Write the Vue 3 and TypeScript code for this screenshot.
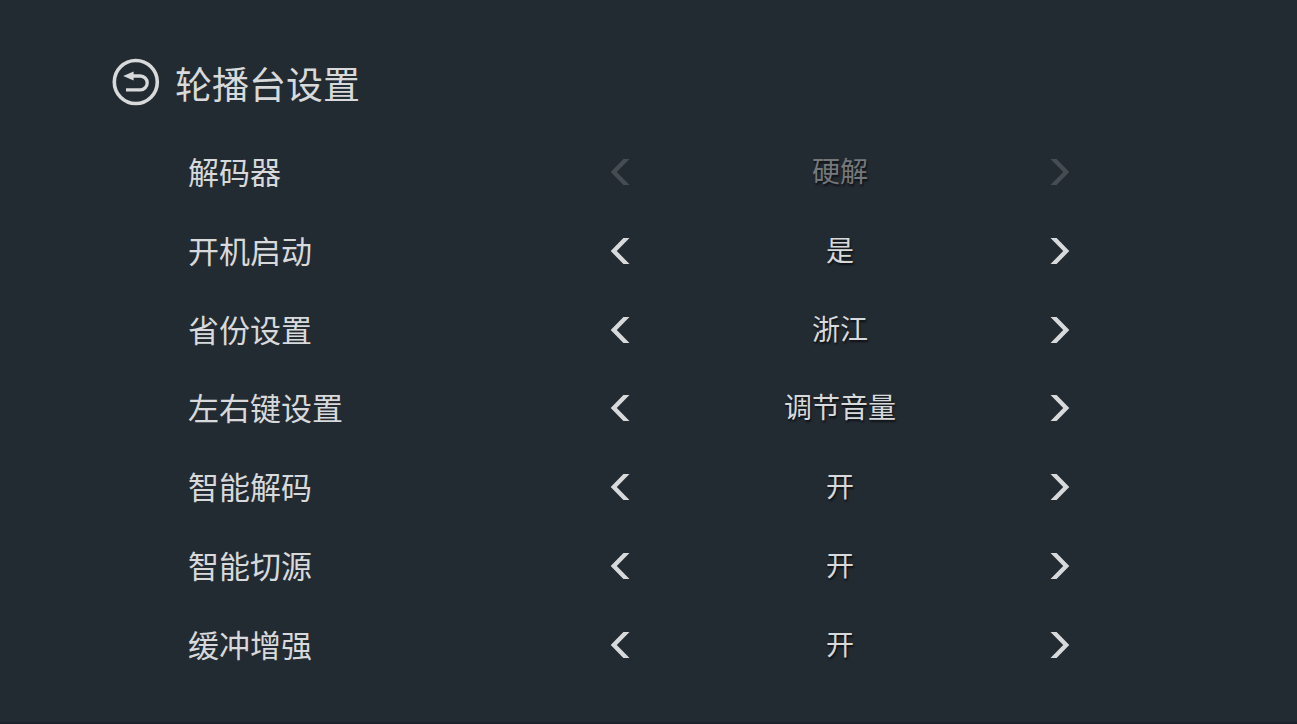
<script setup lang="ts">
import { reactive } from 'vue'

interface Setting {
  id: string
  label: string
  options: string[]
  index: number
  disabled?: boolean
}

const settings = reactive<Setting[]>([
  { id: 'decoder', label: '解码器', options: ['硬解', '软解'], index: 0, disabled: true },
  { id: 'boot', label: '开机启动', options: ['是', '否'], index: 0 },
  { id: 'province', label: '省份设置', options: ['浙江', '江苏', '上海'], index: 0 },
  { id: 'keys', label: '左右键设置', options: ['调节音量', '切换频道'], index: 0 },
  { id: 'smart-decode', label: '智能解码', options: ['开', '关'], index: 0 },
  { id: 'smart-source', label: '智能切源', options: ['开', '关'], index: 0 },
  { id: 'buffer', label: '缓冲增强', options: ['开', '关'], index: 0 },
])

function step(item: Setting, delta: number): void {
  const count = item.options.length
  item.index = (item.index + delta + count) % count
}
</script>

<template>
  <main class="page">
    <header class="header">
      <button class="back" type="button" aria-label="返回">
        <svg viewBox="0 0 48 48" width="48" height="48" aria-hidden="true">
          <circle cx="23.8" cy="24" r="21.5" fill="none" stroke="currentColor" stroke-width="3.6" />
          <path d="M18 18H28.3a6.9 6.9 0 0 1 0 13.8H14" fill="none" stroke="currentColor" stroke-width="3.3" />
          <path d="M11.2 18L21.6 13.6V22.4Z" fill="currentColor" />
        </svg>
      </button>
      <h1 class="title">轮播台设置</h1>
    </header>

    <ul class="list">
      <li v-for="item in settings" :key="item.id" class="row">
        <span :id="item.id" class="label">{{ item.label }}</span>
        <div class="selector" :class="{ disabled: item.disabled }" role="group" :aria-labelledby="item.id">
          <button class="arrow" type="button" aria-label="上一项" :disabled="item.disabled" @click="step(item, -1)">
            <svg viewBox="0 0 20 28" width="20" height="28" aria-hidden="true">
              <path d="M13.4 1H19.5L6.8 14L19.5 27H13.4L0.7 14Z" fill="currentColor" />
            </svg>
          </button>
          <output class="value">{{ item.options[item.index] }}</output>
          <button class="arrow" type="button" aria-label="下一项" :disabled="item.disabled" @click="step(item, 1)">
            <svg viewBox="0 0 20 28" width="20" height="28" aria-hidden="true">
              <path d="M6.6 1H0.5L13.2 14L0.5 27H6.6L19.3 14Z" fill="currentColor" />
            </svg>
          </button>
        </div>
      </li>
    </ul>
  </main>
</template>

<style>
body {
  margin: 0;
  background: #232b32;
}
</style>

<style scoped>
.page {
  box-sizing: border-box;
  display: flex;
  flex-direction: column;
  min-height: 100vh;
  padding: 56px 217px 38px 112px;
  border-bottom: 2px solid #1b202b;
  background: #232b32;
  color: #d7d9da;
  font-family: "Noto Sans CJK SC", "Noto Sans", sans-serif;
}

.header {
  display: flex;
  align-items: center;
  gap: 15px;
  height: 54px;
  margin-bottom: 23px;
}

button {
  display: flex;
  align-items: center;
  justify-content: center;
  padding: 0;
  border: 0;
  background: none;
  color: inherit;
  cursor: pointer;
}

.back {
  margin-bottom: 2px;
}

.title {
  margin: 0;
  font-size: 37px;
  font-weight: 400;
  line-height: 54px;
}

.list {
  display: grid;
  flex: 1;
  grid-auto-rows: 1fr;
  margin: 0;
  padding: 0 0 0 76px;
  list-style: none;
}

.row {
  display: flex;
  align-items: center;
  justify-content: space-between;
}

.label {
  padding-bottom: 2px;
  font-size: 31px;
  line-height: 40px;
  white-space: nowrap;
}

.selector {
  display: flex;
  align-items: center;
  flex: 0 1 480px;
}

.arrow {
  flex: none;
  width: 40px;
  height: 40px;
}

.value {
  flex: 1;
  padding-bottom: 4px;
  font-size: 28px;
  line-height: 40px;
  text-align: center;
  text-shadow: 1px 2px 2px #0c1014;
}

.disabled .value {
  color: #75787b;
}

.disabled .arrow {
  color: #454c52;
  cursor: default;
}
</style>
